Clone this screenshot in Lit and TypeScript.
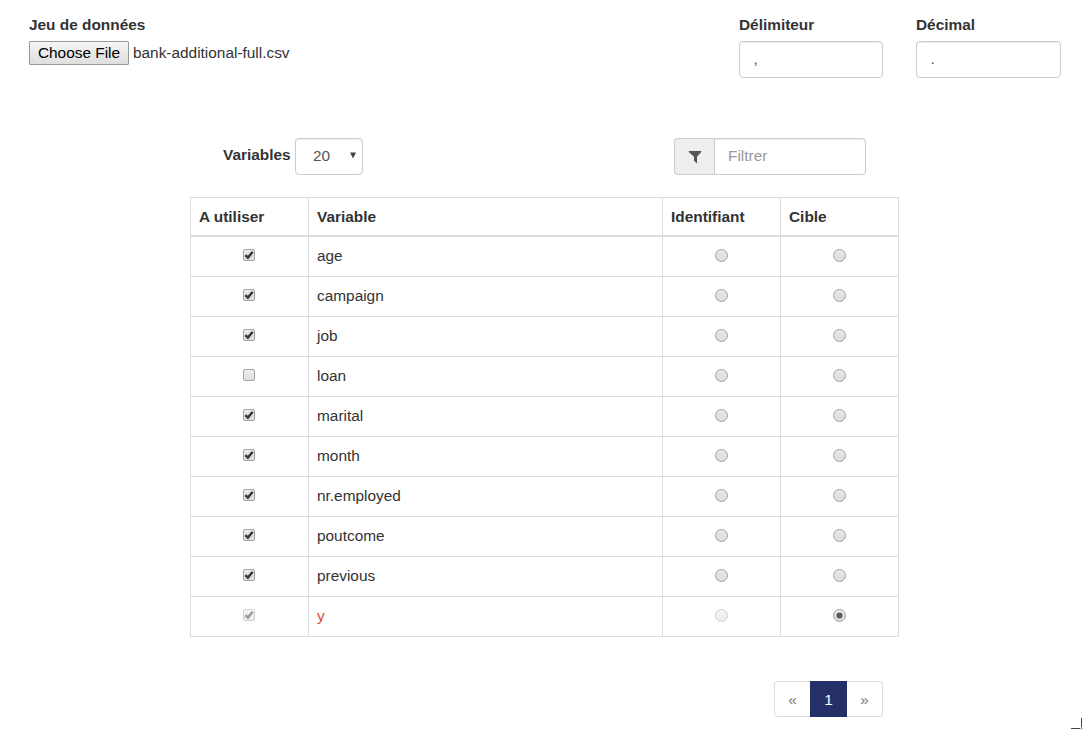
import { LitElement, html, css, svg } from "lit";
import { customElement, property, state } from "lit/decorators.js";

@customElement("check-mark-box")
class CheckMarkBox extends LitElement {
  @property({ type: Boolean }) checked = false;
  static styles = css`
    :host { display: block; width: 12px; height: 12px; margin: 0 auto; }
    svg { display: block; }
  `;
  render() {
    return html`<svg width="12" height="12" viewBox="0 0 12 12">
      <defs><linearGradient id="g" x1="0" y1="0" x2="0" y2="1">
        <stop offset="0" stop-color="#eeeeee" /><stop offset="0.38" stop-color="#e6e6e6" /><stop offset="1" stop-color="#dcdcdc" />
      </linearGradient></defs>
      <rect x="0.5" y="0.5" width="11" height="11" rx="1.5" fill="url(#g)" stroke="#a5a5a5" />
      ${this.checked ? svg`<path d="M2.4 6.2 L4.9 8.6 L9.7 2.8" fill="none" stroke="#3a3a3a" stroke-width="2.5" />` : ""}
    </svg>`;
  }
}

@customElement("radio-dot")
class RadioDot extends LitElement {
  @property({ type: Boolean }) checked = false;
  static styles = css`
    :host { display: block; width: 13px; height: 13px; margin: 0 auto; }
    svg { display: block; }
  `;
  render() {
    return html`<svg width="13" height="13" viewBox="0 0 13 13">
      <defs><linearGradient id="g" x1="0" y1="0" x2="0" y2="1">
        <stop offset="0" stop-color="#eeeeee" /><stop offset="0.38" stop-color="#e2e2e2" /><stop offset="1" stop-color="#dcdcdc" />
      </linearGradient></defs>
      <circle cx="6.5" cy="6.5" r="6" fill="url(#g)" stroke="#a0a0a0" />
      ${this.checked ? svg`<circle cx="6.5" cy="6.5" r="3" fill="#5a5a5a" />` : ""}
    </svg>`;
  }
}

interface Row { name: string; used: boolean; target?: boolean; }

@customElement("app-root")
class AppRoot extends LitElement {
  @state() private rows: Row[] = [
    { name: "age", used: true },
    { name: "campaign", used: true },
    { name: "job", used: true },
    { name: "loan", used: false },
    { name: "marital", used: true },
    { name: "month", used: true },
    { name: "nr.employed", used: true },
    { name: "poutcome", used: true },
    { name: "previous", used: true },
    { name: "y", used: true, target: true },
  ];

  static styles = css`
    :host {
      display: flex; flex-direction: column; position: relative; box-sizing: border-box;
      width: 1083px; height: 730px; overflow: hidden; background: #fff; color: #333;
      font: 15.4px/21px "Liberation Sans", Arial, sans-serif;
    }
    * { box-sizing: border-box; }
    .label { font-weight: bold; }
    .top { display: flex; padding: 14px 22px 0 29px; height: 78px; flex: none; }
    .file { width: 710px; }
    .picker { display: flex; gap: 4px; margin-top: 6px; height: 24px; }
    .picker span { padding-top: 1px; }
    .choose {
      width: 100px; height: 24px; border: 1px solid #999; border-radius: 1px; padding: 0; color: #000;
      background: linear-gradient(#f6f6f6, #dedede); font: inherit; line-height: 22px; text-align: center;
    }
    .delim { width: 144px; margin-right: 33px; }
    .decimal { width: 145px; }
    .box {
      height: 37px; border: 1px solid #ccc; border-radius: 4px; color: #555; background: #fff;
      box-shadow: inset 0 1px 1px rgba(0, 0, 0, 0.075); padding: 6px 13px;
    }
    .top .box { margin-top: 6px; padding-left: 13.5px; }
    .tools { display: flex; margin-top: 60px; padding-left: 223px; height: 37px; flex: none; }
    .tools .label { width: 72px; padding-top: 6px; }
    .select { width: 68px; padding: 6px 6px 6px 17px; display: flex; justify-content: space-between; }
    .select svg { margin-top: 7px; }
    .filter { display: flex; margin-left: 311px; }
    .addon {
      width: 40px; height: 37px; border: 1px solid #ccc; border-right: 0; border-radius: 4px 0 0 4px;
      background: #eee; padding: 12px 0 0 13px;
    }
    .addon svg { display: block; }
    .query { width: 152px; border-radius: 0 4px 4px 0; color: #999; }
    table {
      border-collapse: collapse; table-layout: fixed; width: 709px; margin: 22px 0 0 190px; flex: none;
    }
    .narrow { width: 118px; }
    .wide { width: 354px; }
    th, td { border: 1px solid #ddd; padding: 0 8px; text-align: left; vertical-align: top; }
    th { height: 38px; padding-top: 8px; border-bottom-width: 2px; }
    td { height: 40px; padding-top: 8px; }
    tbody tr:first-child td { height: 41px; }
    .control { padding-top: 12px; }
    .use { padding-right: 9px; }
    .target { color: #dd4b39; }
    .faded { opacity: 0.5; }
    .pages { display: flex; margin: 44px 0 0 774px; width: 109px; height: 36px; text-align: center; flex: none; }
    .page { width: 36px; border: 1px solid #ddd; color: #777; padding-top: 7px; }
    .prev { border-right: 0; border-radius: 4px 0 0 4px; }
    .next { border-left: 0; border-radius: 0 4px 4px 0; }
    .current { width: 37px; background: #253069; border-color: #253069; color: #fff; }
    .cursor { position: absolute; right: 0; bottom: 0; }
  `;

  render() {
    return html`
      <div class="top">
        <div class="file">
          <div class="label">Jeu de données</div>
          <div class="picker"><button class="choose">Choose File</button><span>bank-additional-full.csv</span></div>
        </div>
        <div class="delim"><div class="label">Délimiteur</div><div class="box">,</div></div>
        <div class="decimal"><div class="label">Décimal</div><div class="box">.</div></div>
      </div>
      <div class="tools">
        <div class="label">Variables</div>
        <div class="box select"><span>20</span>
          <svg width="6" height="7" viewBox="0 0 6 7"><path d="M0 0.5H6L3 6.5Z" fill="#444" /></svg>
        </div>
        <div class="filter">
          <div class="addon"><svg width="14" height="13" viewBox="0 0 14 13"><path d="M0.8 0H13.2V1L9 5.8V12.5L6 9.7V5.8L0.8 1Z" fill="#555" /></svg></div>
          <div class="box query">Filtrer</div>
        </div>
      </div>
      <table>
        <colgroup><col class="narrow" /><col class="wide" /><col class="narrow" /><col class="narrow" /></colgroup>
        <thead><tr><th>A utiliser</th><th>Variable</th><th>Identifiant</th><th>Cible</th></tr></thead>
        <tbody>
          ${this.rows.map((r) => html`<tr>
            <td class="control use"><check-mark-box class=${r.target ? "faded" : ""} .checked=${r.used}></check-mark-box></td>
            <td class=${r.target ? "target" : ""}>${r.name}</td>
            <td class="control"><radio-dot class=${r.target ? "faded" : ""}></radio-dot></td>
            <td class="control"><radio-dot .checked=${!!r.target}></radio-dot></td>
          </tr>`)}
        </tbody>
      </table>
      <div class="pages">
        <div class="page prev">«</div><div class="page current">1</div><div class="page next">»</div>
      </div>
      <svg class="cursor" width="13" height="13" viewBox="0 0 13 13">
        <path d="M1 11.5H10M11.5 1V10" stroke="#444" fill="none" /><path d="M10 11.5H13M11.5 10V13" stroke="#bbb" fill="none" />
      </svg>
    `;
  }
}
